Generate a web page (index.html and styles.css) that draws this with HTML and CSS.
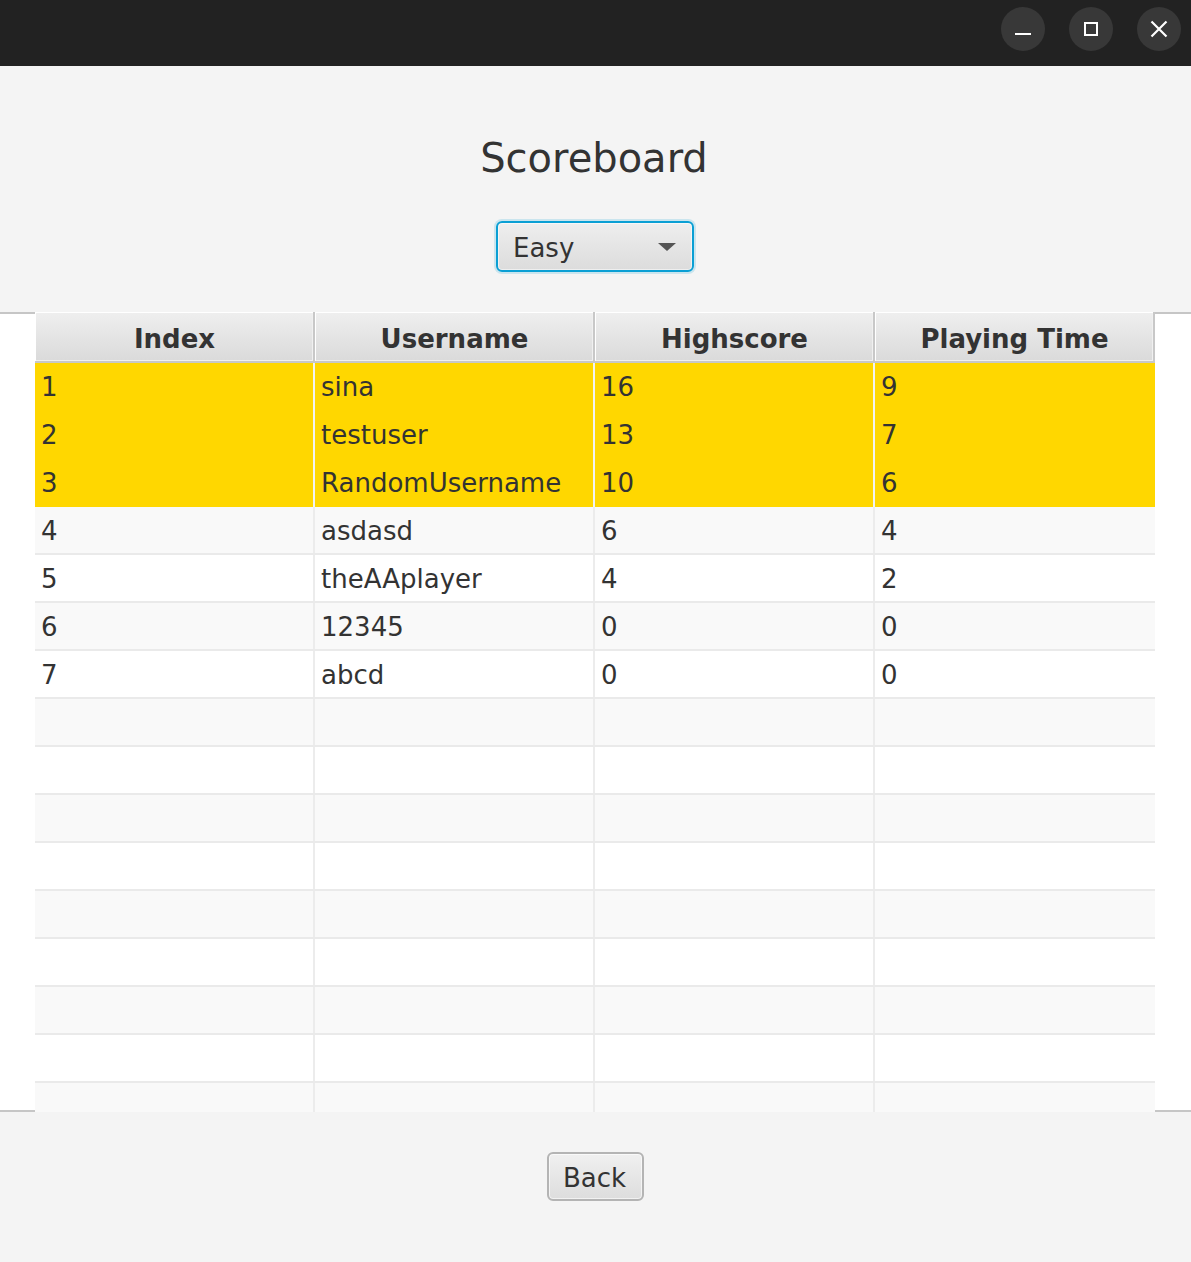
FILE: index.html
```html
<!DOCTYPE html>
<html>
<head>
<meta charset="utf-8">
<link rel="stylesheet" href="styles.css">
</head>
<body>
<div class="titlebar">
  <div class="wbtn">
    <svg width="44" height="44" viewBox="0 0 44 44"><path d="M14 27h16" stroke="#fff" stroke-width="2" fill="none"/></svg>
  </div>
  <div class="wbtn">
    <svg width="44" height="44" viewBox="0 0 44 44"><rect x="16" y="16" width="12" height="12" stroke="#fff" stroke-width="2" fill="none"/></svg>
  </div>
  <div class="wbtn">
    <svg width="44" height="44" viewBox="0 0 44 44"><path d="M14.5 14.5l15 15M29.5 14.5l-15 15" stroke="#fff" stroke-width="2.2" fill="none"/></svg>
  </div>
</div>
<main class="content">
  <h1 class="title">Scoreboard</h1>
  <div class="combo"><span class="combo-text">Easy</span><span class="arrow"></span></div>
  <div class="tablewrap">
    <div class="table">
      <div class="thead">
        <div class="th">Index</div>
        <div class="th">Username</div>
        <div class="th">Highscore</div>
        <div class="th">Playing Time</div>
      </div>
      <div class="tbody">
        <div class="row gold"><div class="td">1</div><div class="td">sina</div><div class="td">16</div><div class="td">9</div></div>
        <div class="row gold"><div class="td">2</div><div class="td">testuser</div><div class="td">13</div><div class="td">7</div></div>
        <div class="row gold"><div class="td">3</div><div class="td">RandomUsername</div><div class="td">10</div><div class="td">6</div></div>
        <div class="row alt"><div class="td">4</div><div class="td">asdasd</div><div class="td">6</div><div class="td">4</div></div>
        <div class="row"><div class="td">5</div><div class="td">theAAplayer</div><div class="td">4</div><div class="td">2</div></div>
        <div class="row alt"><div class="td">6</div><div class="td">12345</div><div class="td">0</div><div class="td">0</div></div>
        <div class="row"><div class="td">7</div><div class="td">abcd</div><div class="td">0</div><div class="td">0</div></div>
        <div class="row alt"><div class="td"></div><div class="td"></div><div class="td"></div><div class="td"></div></div>
        <div class="row"><div class="td"></div><div class="td"></div><div class="td"></div><div class="td"></div></div>
        <div class="row alt"><div class="td"></div><div class="td"></div><div class="td"></div><div class="td"></div></div>
        <div class="row"><div class="td"></div><div class="td"></div><div class="td"></div><div class="td"></div></div>
        <div class="row alt"><div class="td"></div><div class="td"></div><div class="td"></div><div class="td"></div></div>
        <div class="row"><div class="td"></div><div class="td"></div><div class="td"></div><div class="td"></div></div>
        <div class="row alt"><div class="td"></div><div class="td"></div><div class="td"></div><div class="td"></div></div>
        <div class="row"><div class="td"></div><div class="td"></div><div class="td"></div><div class="td"></div></div>
        <div class="row alt"><div class="td"></div><div class="td"></div><div class="td"></div><div class="td"></div></div>
      </div>
    </div>
  </div>
  <div class="footer">
    <button class="btn">Back</button>
  </div>
</main>
</body>
</html>
```

FILE: styles.css
```css
html, body {
  margin: 0;
  padding: 0;
}
body {
  width: 1191px;
  height: 1262px;
  overflow: hidden;
  background: #f4f4f4;
  font-family: "DejaVu Sans", sans-serif;
  color: #333333;
  display: flex;
  flex-direction: column;
}
.titlebar {
  height: 66px;
  background: #222222;
  display: flex;
  justify-content: flex-end;
  align-items: flex-start;
  gap: 24px;
  padding: 7px 10px 0 0;
  box-sizing: border-box;
  flex: none;
}
.wbtn {
  width: 44px;
  height: 44px;
  border-radius: 50%;
  background: #383838;
}
.wbtn svg {
  display: block;
}
.content {
  flex: 1;
  display: flex;
  flex-direction: column;
  align-items: center;
}
.title {
  margin: 68px 0 0 -3px;
  height: 48px;
  font-size: 40px;
  line-height: 48px;
  font-weight: normal;
  color: #333333;
}
.combo {
  margin-top: 39px;
  margin-left: -1px;
  width: 198px;
  height: 51px;
  box-sizing: border-box;
  border: 2px solid #0a9fd4;
  border-radius: 6px;
  background: linear-gradient(to bottom, #eeeeee, #dcdcdc);
  box-shadow: 0 0 0 2px rgba(10, 159, 212, 0.18), inset 0 0 0 1px rgba(255, 255, 255, 0.55);
  display: flex;
  align-items: center;
  justify-content: space-between;
  padding: 2px 16px 0 15px;
}
.combo-text {
  font-size: 26px;
  line-height: 30px;
}
.arrow {
  width: 0;
  height: 0;
  border-left: 9px solid transparent;
  border-right: 9px solid transparent;
  border-top: 8px solid #555555;
  margin-top: -2px;
}
.tablewrap {
  margin-top: 40px;
  align-self: stretch;
  height: 800px;
  box-sizing: border-box;
  background: #ffffff;
  border-top: 2px solid #c6c6c6;
  border-bottom: 2px solid #c6c6c6;
  padding: 0 36px 0 35px;
  flex: none;
}
.table {
  margin: -2px 0 -2px;
  height: 800px;
  display: flex;
  flex-direction: column;
  overflow: hidden;
}
.thead {
  display: flex;
  height: 51px;
  flex: none;
}
.th {
  width: 280px;
  height: 51px;
  box-sizing: border-box;
  border-right: 2px solid #c8c8c8;
  border-bottom: 2px solid #c8c8c8;
  background: linear-gradient(to bottom, #efefef, #dadada);
  box-shadow: inset 1px 1px 0 #ffffff, inset -1px -1px 0 #f0f0f0;
  font-weight: bold;
  font-size: 26px;
  line-height: 49px;
  padding-top: 3px;
  padding-left: 1px;
  text-align: center;
  color: #333333;
}
.tbody {
  flex: 1;
  overflow: hidden;
}
.row {
  display: flex;
  height: 48px;
  box-sizing: border-box;
  border-bottom: 2px solid #eaeaea;
  background: #ffffff;
}
.row.alt {
  background: #f9f9f9;
}
.row.gold {
  background: #ffd700;
  border-bottom: none;
}
.td {
  width: 280px;
  box-sizing: border-box;
  border-right: 2px solid #ececec;
  padding-left: 6px;
  padding-top: 1px;
  font-size: 26px;
  line-height: 46px;
  white-space: nowrap;
  color: #333333;
}
.td:last-child {
  border-right: none;
}
.row.gold .td {
  line-height: 48px;
  padding-top: 0;
  border-right-color: #f2f2f2;
}
.row.gold .td:last-child {
  border-right: none;
}
.footer {
  flex: 1;
  display: flex;
  justify-content: center;
  align-items: flex-start;
  padding-top: 40px;
}
.btn {
  width: 97px;
  height: 49px;
  box-sizing: border-box;
  border: 2px solid #b4b4b4;
  border-radius: 6px;
  background: linear-gradient(to bottom, #f0f0f0, #dddddd);
  box-shadow: inset 0 0 0 1px rgba(255, 255, 255, 0.6);
  font-family: "DejaVu Sans", sans-serif;
  font-size: 26px;
  color: #333333;
  padding: 3px 1px 0 0;
  margin-left: -1px;
  text-align: center;
}
```
